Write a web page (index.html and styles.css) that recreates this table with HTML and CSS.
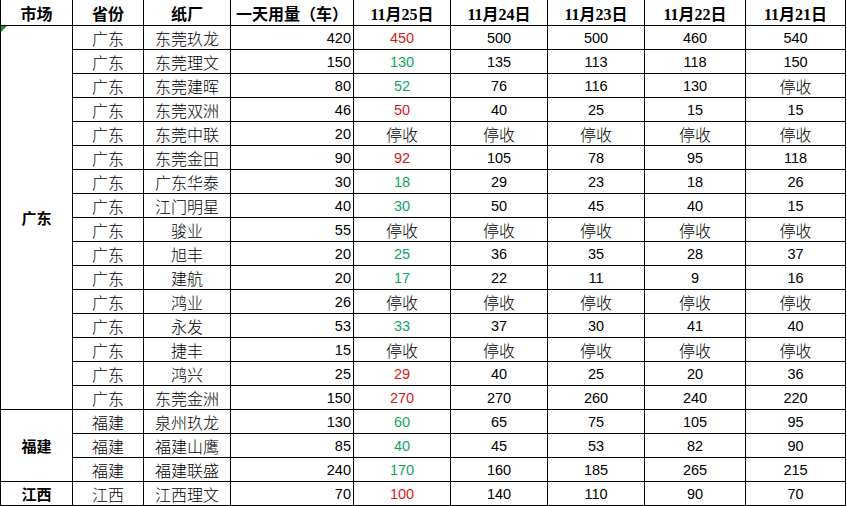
FILE: index.html
```html
<!DOCTYPE html>
<html lang="zh">
<head>
<meta charset="utf-8">
<link rel="stylesheet" href="styles.css">
</head>
<body>
<div class="sheet">
  <div class="h">市场</div><div class="h">省份</div><div class="h">纸厂</div><div class="h">一天用量（车）</div><div class="h">11月25日</div><div class="h">11月24日</div><div class="h">11月23日</div><div class="h">11月22日</div><div class="h">11月21日</div>

  <div class="m gd">广东</div>
  <div class="c">广东</div><div class="c">东莞玖龙</div><div class="u">420</div><div class="n red">450</div><div class="n">500</div><div class="n">500</div><div class="n">460</div><div class="n">540</div>
  <div class="c">广东</div><div class="c">东莞理文</div><div class="u">150</div><div class="n grn">130</div><div class="n">135</div><div class="n">113</div><div class="n">118</div><div class="n">150</div>
  <div class="c">广东</div><div class="c">东莞建晖</div><div class="u">80</div><div class="n grn">52</div><div class="n">76</div><div class="n">116</div><div class="n">130</div><div class="c">停收</div>
  <div class="c">广东</div><div class="c">东莞双洲</div><div class="u">46</div><div class="n red">50</div><div class="n">40</div><div class="n">25</div><div class="n">15</div><div class="n">15</div>
  <div class="c">广东</div><div class="c">东莞中联</div><div class="u">20</div><div class="c">停收</div><div class="c">停收</div><div class="c">停收</div><div class="c">停收</div><div class="c">停收</div>
  <div class="c">广东</div><div class="c">东莞金田</div><div class="u">90</div><div class="n red">92</div><div class="n">105</div><div class="n">78</div><div class="n">95</div><div class="n">118</div>
  <div class="c">广东</div><div class="c">广东华泰</div><div class="u">30</div><div class="n grn">18</div><div class="n">29</div><div class="n">23</div><div class="n">18</div><div class="n">26</div>
  <div class="c">广东</div><div class="c">江门明星</div><div class="u">40</div><div class="n grn">30</div><div class="n">50</div><div class="n">45</div><div class="n">40</div><div class="n">15</div>
  <div class="c">广东</div><div class="c">骏业</div><div class="u">55</div><div class="c">停收</div><div class="c">停收</div><div class="c">停收</div><div class="c">停收</div><div class="c">停收</div>
  <div class="c">广东</div><div class="c">旭丰</div><div class="u">20</div><div class="n grn">25</div><div class="n">36</div><div class="n">35</div><div class="n">28</div><div class="n">37</div>
  <div class="c">广东</div><div class="c">建航</div><div class="u">20</div><div class="n grn">17</div><div class="n">22</div><div class="n">11</div><div class="n">9</div><div class="n">16</div>
  <div class="c">广东</div><div class="c">鸿业</div><div class="u">26</div><div class="c">停收</div><div class="c">停收</div><div class="c">停收</div><div class="c">停收</div><div class="c">停收</div>
  <div class="c">广东</div><div class="c">永发</div><div class="u">53</div><div class="n grn">33</div><div class="n">37</div><div class="n">30</div><div class="n">41</div><div class="n">40</div>
  <div class="c">广东</div><div class="c">捷丰</div><div class="u">15</div><div class="c">停收</div><div class="c">停收</div><div class="c">停收</div><div class="c">停收</div><div class="c">停收</div>
  <div class="c">广东</div><div class="c">鸿兴</div><div class="u">25</div><div class="n red">29</div><div class="n">40</div><div class="n">25</div><div class="n">20</div><div class="n">36</div>
  <div class="c">广东</div><div class="c">东莞金洲</div><div class="u">150</div><div class="n red">270</div><div class="n">270</div><div class="n">260</div><div class="n">240</div><div class="n">220</div>

  <div class="m fj">福建</div>
  <div class="c">福建</div><div class="c">泉州玖龙</div><div class="u">130</div><div class="n grn">60</div><div class="n">65</div><div class="n">75</div><div class="n">105</div><div class="n">95</div>
  <div class="c">福建</div><div class="c">福建山鹰</div><div class="u">85</div><div class="n grn">40</div><div class="n">45</div><div class="n">53</div><div class="n">82</div><div class="n">90</div>
  <div class="c">福建</div><div class="c">福建联盛</div><div class="u">240</div><div class="n grn">170</div><div class="n">160</div><div class="n">185</div><div class="n">265</div><div class="n">215</div>

  <div class="m">江西</div>
  <div class="c">江西</div><div class="c">江西理文</div><div class="u">70</div><div class="n red">100</div><div class="n">140</div><div class="n">110</div><div class="n">90</div><div class="n">70</div>
</div>
</body>
</html>
```
FILE: styles.css
```css
html, body {
  margin: 0;
  padding: 0;
  background: #ffffff;
}
.sheet {
  display: grid;
  grid-template-columns: 71px 70px 86px 122px 96px 96px 96px 100px 99px;
  grid-template-rows: 25px repeat(20, 23px);
  gap: 1px;
  padding: 0 1px 1px 1px;
  background: #000000;
  width: max-content;
}
.sheet > div {
  background: #ffffff;
  display: flex;
  align-items: center;
  justify-content: center;
  color: #000000;
  white-space: nowrap;
  overflow: hidden;
}
.h {
  font-family: "Liberation Serif", "Noto Sans CJK SC", serif;
  font-weight: 700;
  font-size: 16px;
}
.c {
  font-family: "Noto Sans CJK SC", sans-serif;
  font-weight: 300;
  font-size: 16px;
}
.n, .u {
  font-family: "Liberation Sans", sans-serif;
  font-size: 14.5px;
}
.sheet > .u {
  justify-content: flex-end;
  padding-right: 2px;
}
.m {
  font-family: "Noto Sans CJK SC", sans-serif;
  font-weight: 700;
  font-size: 15px;
}
.sheet > .m {
  overflow: visible;
}
.gd {
  grid-row: span 16;
  position: relative;
}
.gd::before {
  content: "";
  position: absolute;
  left: 0;
  top: 0;
  width: 0;
  height: 0;
  border-top: 6px solid #1f8a3a;
  border-right: 6px solid transparent;
}
.fj {
  grid-row: span 3;
}
.red {
  color: #d21a1a !important;
}
.grn {
  color: #12a45c !important;
}
```
